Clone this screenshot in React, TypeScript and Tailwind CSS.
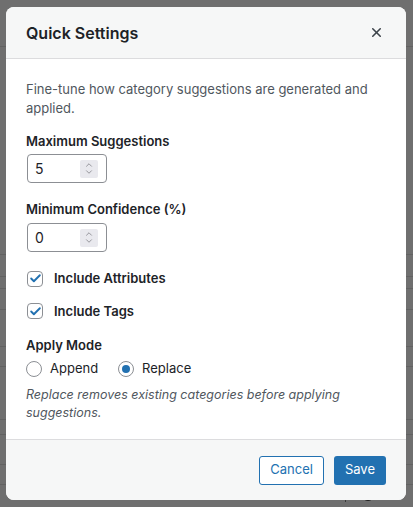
import { Check, ChevronDown, ChevronUp, X } from 'lucide-react';

const font = { fontFamily: 'Inter, "Liberation Sans", sans-serif' };

/** Background rows of the page behind the dimmed overlay. */
const rows = [47, 208, 22, 12, 21, 37, 20, 53, 15, 30, 20];

function NumberField({ value }: { value: string }) {
  return (
    <div className="flex h-[29px] w-[80px] items-center justify-between rounded-[4px] border border-[#8c8f94] bg-white pl-[7px] pr-[8px]">
      <span className="text-[14px] text-[#1d2327]">{value}</span>
      <span className="flex h-[18px] w-[18px] flex-col items-center justify-center rounded-[2px] bg-[#e9e9ee] text-[#86868b]">
        <ChevronUp className="-mb-[3px] h-[10px] w-[10px]" strokeWidth={2} />
        <ChevronDown className="h-[10px] w-[10px]" strokeWidth={2} />
      </span>
    </div>
  );
}

function CheckRow({ label }: { label: string }) {
  return (
    <div className="flex items-center gap-[11px]">
      <span className="flex h-[16px] w-[16px] items-center justify-center rounded-[4px] border border-[#8c8f94] bg-white text-[#2271b1]">
        <Check className="h-[13px] w-[13px]" strokeWidth={3.5} />
      </span>
      <span className="text-[13px] font-semibold text-[#1d2327]">{label}</span>
    </div>
  );
}

function Radio({ label, checked }: { label: string; checked?: boolean }) {
  return (
    <div className="flex items-center gap-[8px]">
      <span className="flex h-[16px] w-[16px] items-center justify-center rounded-full border border-[#8c8f94] bg-white">
        {checked && <span className="h-[8px] w-[8px] rounded-full bg-[#2271b1]" />}
      </span>
      <span className="text-[13px] text-[#1d2327]">{label}</span>
    </div>
  );
}

export default function App() {
  return (
    <div className="relative h-[507px] w-[413px] overflow-hidden bg-[#6f6f6f]" style={font}>
      <div className="flex flex-col">
        {rows.map((h, i) => (
          <div key={i} className="border-b border-[#626262]" style={{ height: h }} />
        ))}
        <div className="flex items-center gap-[8px] pl-[327px] pt-[3px] text-[#1d1d1d]">
          <ChevronDown className="h-[10px] w-[10px]" strokeWidth={3} />
          <span className="h-[14px] w-px bg-[#3a3a3a]" />
          <span className="ml-[8px] h-[12px] w-[12px] rounded-full bg-[#1d1d1d]" />
        </div>
      </div>

      <div className="absolute left-[6px] top-[7px] flex h-[493px] w-[400px] flex-col overflow-hidden rounded-[8px] bg-white">
        <div className="flex h-[52px] shrink-0 items-center justify-between border-b border-[#dcdcde] bg-[#f6f7f7] pl-[20px] pr-[22px]">
          <h1 className="text-[16px] font-semibold text-[#1d2327]">Quick Settings</h1>
          <X className="h-[15px] w-[15px] text-[#3c434a]" strokeWidth={2.5} />
        </div>

        <div className="flex flex-1 flex-col px-[20px] pt-[21px]">
          <p className="text-[13px] leading-[19px] text-[#50575e]">
            Fine-tune how category suggestions are generated and applied.
          </p>

          <label className="mt-[14px] text-[13px] leading-[18px] font-semibold text-[#1d2327]">
            Maximum Suggestions
          </label>
          <div className="mt-[4px] pl-[1px]">
            <NumberField value="5" />
          </div>

          <label className="mt-[17px] text-[13px] leading-[18px] font-semibold text-[#1d2327]">
            Minimum Confidence (%)
          </label>
          <div className="mt-[5px] pl-[1px]">
            <NumberField value="0" />
          </div>

          <div className="mt-[17px] flex flex-col gap-[13px] pl-[1px]">
            <CheckRow label="Include Attributes" />
            <CheckRow label="Include Tags" />
          </div>

          <label className="mt-[15px] text-[13px] leading-[18px] font-semibold text-[#1d2327]">
            Apply Mode
          </label>
          <div className="mt-[5px] flex items-center gap-[20px]">
            <Radio label="Append" />
            <Radio label="Replace" checked />
          </div>

          <p className="mt-[7px] text-[12.5px] leading-[18px] text-[#50575e] italic">
            Replace removes existing categories before applying suggestions.
          </p>
        </div>

        <div className="flex h-[61px] shrink-0 items-center justify-end gap-[10px] border-t border-[#dcdcde] bg-[#f6f7f7] pr-[20px]">
          <button className="h-[29px] rounded-[3px] border border-[#2271b1] bg-white px-[10px] text-[13px] text-[#2271b1]">
            Cancel
          </button>
          <button className="h-[29px] rounded-[3px] bg-[#2271b1] px-[11px] text-[13px] text-white">
            Save
          </button>
        </div>
      </div>
    </div>
  );
}
